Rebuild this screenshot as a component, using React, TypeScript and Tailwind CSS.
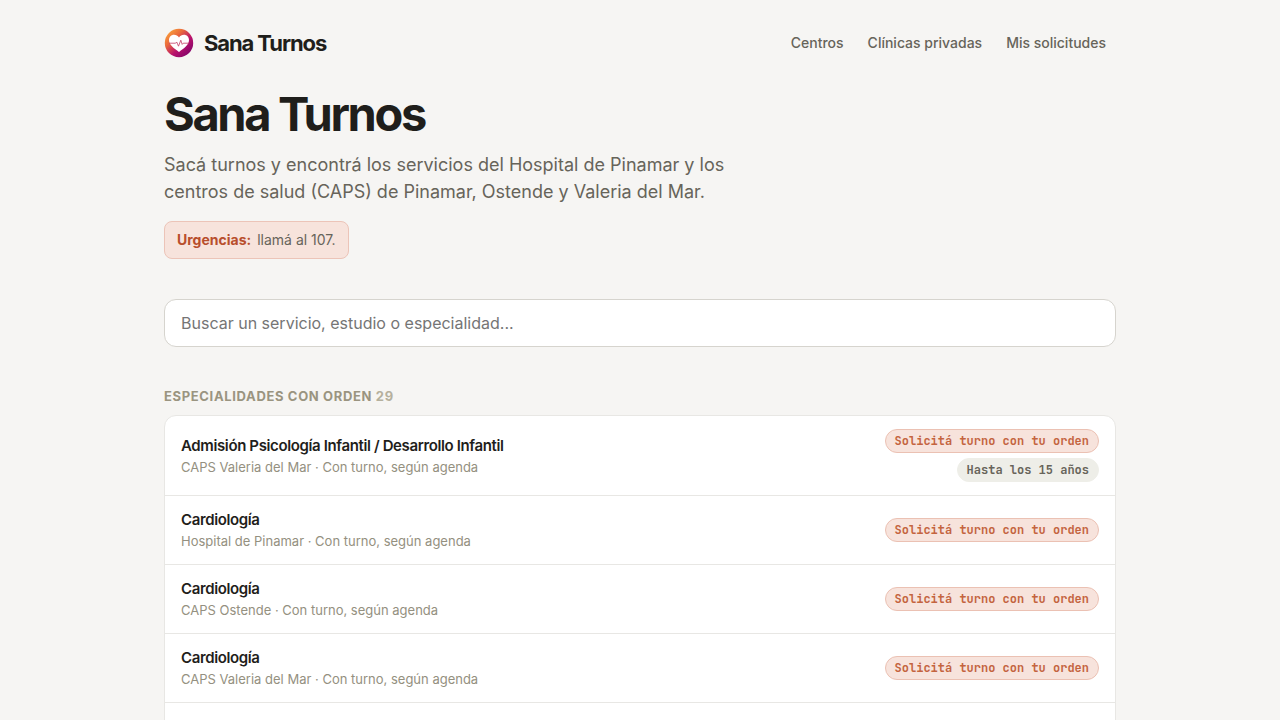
const LINKS = ["Centros", "Clínicas privadas", "Mis solicitudes"];

const SERVICES = [
  {
    name: "Admisión Psicología Infantil / Desarrollo Infantil",
    place: "CAPS Valeria del Mar",
    note: "Hasta los 15 años",
  },
  { name: "Cardiología", place: "Hospital de Pinamar" },
  { name: "Cardiología", place: "CAPS Ostende" },
  { name: "Cardiología", place: "CAPS Valeria del Mar" },
  { name: "Diabetes", place: "Hospital de Pinamar" },
];

const Logo = () => (
  <svg viewBox="0 0 30 30" className="h-[30px] w-[30px]" aria-hidden="true">
    <defs>
      <linearGradient id="logo" x1="0.1" y1="0.1" x2="0.85" y2="0.9">
        <stop offset="0" stopColor="#f9a03a" />
        <stop offset="0.3" stopColor="#ea6a3c" />
        <stop offset="0.65" stopColor="#b8106c" />
        <stop offset="1" stopColor="#85066b" />
      </linearGradient>
    </defs>
    <circle cx="15" cy="15" r="14.2" fill="url(#logo)" />
    <path
      d="M15 24C10.2 20.6 5 17 5 12.1c0-3.1 2.2-5.3 5-5.3 2 0 3.9 1 5 2.8 1.1-1.8 3-2.8 5-2.8 2.8 0 5 2.2 5 5.3 0 4.9-5.2 8.5-10 11.9z"
      fill="#fff"
    />
    <path
      d="M5 15.2h6.6l1.1-1.2 1.8 4.2 2.3-6 1.4 4.2 1-1.2H25"
      fill="none"
      stroke="#c23a63"
      strokeWidth="0.8"
      strokeLinejoin="round"
    />
  </svg>
);

const Header = () => (
  <header className="flex items-center justify-between">
    <a href="#inicio" className="flex items-center gap-2.5">
      <Logo />
      <span className="text-[22px] leading-[30px] font-bold tracking-tighter">
        Sana Turnos
      </span>
    </a>
    <nav className="flex gap-1">
      {LINKS.map((link) => (
        <a
          key={link}
          href="#"
          className="px-2.5 text-[14px] leading-5 font-medium text-[#67645a]"
        >
          {link}
        </a>
      ))}
    </nav>
  </header>
);

const badge =
  "rounded-full border px-[9px] font-['JetBrains_Mono','DejaVu_Sans_Mono',monospace] text-[12px] leading-[22px] font-bold";

const App = () => {
  return (
    <div className="min-h-screen bg-[#f6f5f3] px-6 font-['Inter',sans-serif] text-[#1f1e1b]">
      <div className="mx-auto max-w-[952px] pt-7">
        <Header />
        <main>
          <h1 className="mt-[30px] text-[47px] leading-[52px] font-bold tracking-tighter">
            Sana Turnos
          </h1>
          <p className="mt-[11px] max-w-[580px] text-[18px] leading-[27px] text-[#67645a]">
            Sacá turnos y encontrá los servicios del Hospital de Pinamar y los
            centros de salud (CAPS) de Pinamar, Ostende y Valeria del Mar.
          </p>
          <p className="mt-4 flex w-fit gap-1.5 rounded-lg border border-[#ecc4b8] bg-[#f7e3dc] px-3 py-2 text-[14px] leading-5 text-[#67645a]">
            <strong className="font-bold text-[#b84e2c]">Urgencias:</strong>
            llamá al 107.
          </p>
          <input
            type="search"
            aria-label="Buscar un servicio"
            placeholder="Buscar un servicio, estudio o especialidad..."
            className="mt-10 h-12 w-full rounded-xl border border-[#d6d4ce] bg-white px-4 text-[16px] placeholder:text-[#757575]"
          />
          <section className="mt-[39px]">
            <h2 className="text-[13px] leading-5 font-bold tracking-wider text-[#9a9480] uppercase">
              Especialidades con orden{" "}
              <span className="text-[#b5b09d]">29</span>
            </h2>
            <ul className="mt-[9px] overflow-hidden rounded-xl border border-[#e8e7e4] bg-white">
              {SERVICES.map((service, i) => (
                <li
                  key={i}
                  className="flex items-center justify-between gap-4 border-b border-[#e8e7e4] px-4 py-[13px] last:border-b-0"
                >
                  <div>
                    <h3 className="text-[15px] leading-[22px] font-semibold tracking-tight">
                      {service.name}
                    </h3>
                    <p className="text-[13px] leading-5 text-[#949080]">
                      {service.place} · Con turno, según agenda
                    </p>
                  </div>
                  <div className="flex flex-col items-end gap-[5px]">
                    <span
                      className={`${badge} border-[#ebc1b3] bg-[#f7e3dc] text-[#c4643f]`}
                    >
                      Solicitá turno con tu orden
                    </span>
                    {service.note && (
                      <span
                        className={`${badge} border-[#eeeee8] bg-[#eeeee8] text-[#67645a]`}
                      >
                        {service.note}
                      </span>
                    )}
                  </div>
                </li>
              ))}
            </ul>
          </section>
        </main>
      </div>
    </div>
  );
};
export default App;
